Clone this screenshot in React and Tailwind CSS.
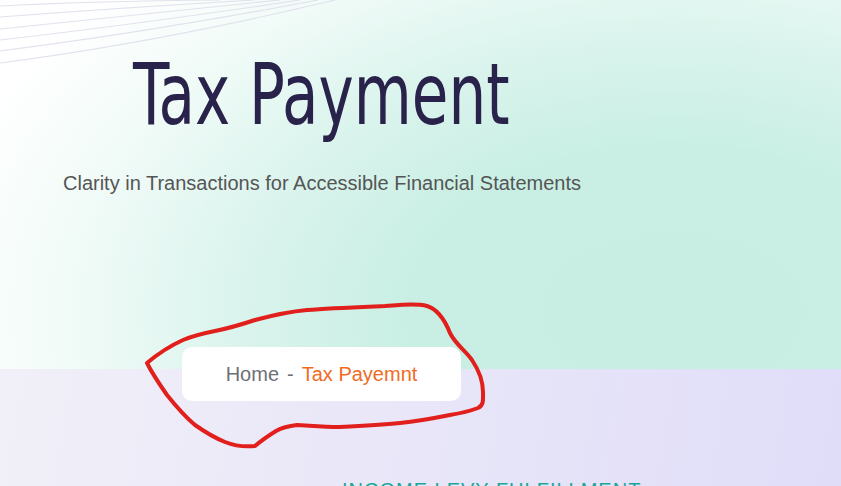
export default function App() {
  const arcs = [
    "M0 63 Q160 42 335 0",
    "M0 51 Q150 32 318 0",
    "M0 40 Q140 24 300 0",
    "M0 29 Q130 16 280 0",
    "M0 17 Q120 8 255 0",
    "M0 6 Q100 1 220 0",
  ];
  return (
    <div className="relative w-[841px] h-[486px] overflow-hidden font-['Liberation_Sans',Arial,sans-serif]">
      <section className="relative h-[369px] bg-[radial-gradient(ellipse_90%_130%_at_80%_85%,#c8eee3_0%,#c9efe4_35%,#dbf4ed_58%,#f1fbf8_80%,#ffffff_100%)]">
        <svg className="absolute left-0 top-0" width="360" height="70" viewBox="0 0 360 70" fill="none">
          {arcs.map((d, i) => (
            <path key={i} d={d} stroke="#e2e2ec" strokeWidth="1.2" />
          ))}
        </svg>
        <div className="relative pt-[46px] pl-[133px]">
          <h1 className="text-[#29234b] text-[86px] leading-[96px] font-normal font-['DejaVu_Sans_Condensed','Liberation_Sans',sans-serif] origin-left scale-x-[0.77] whitespace-nowrap">
            Tax Payment
          </h1>
        </div>
        <p className="relative mt-[29px] pl-[63px] text-[20px] leading-[24px] text-[#555555]">
          Clarity in Transactions for Accessible Financial Statements
        </p>
      </section>
      <section className="relative flex h-[117px] flex-col bg-[linear-gradient(100deg,#f1f0f8_0%,#e9e7f8_45%,#e0ddf9_100%)]">
        <div className="relative z-10 -mt-[22px] ml-[182px] flex h-[54px] w-[279px] shrink-0 items-center justify-center gap-[8px] rounded-[10px] bg-white text-[20px]">
          <span className="text-[#6e6f75]">Home</span>
          <span className="text-[#6e6f75]">-</span>
          <span className="text-[#f26a1f]">Tax Payemnt</span>
        </div>
        <p className="mt-[79px] shrink-0 pl-[342px] text-[20px] leading-[20px] tracking-[1px] text-[#1aa79a] whitespace-nowrap">
          INCOME LEVY FULFILLMENT
        </p>
      </section>
      <svg className="pointer-events-none absolute left-0 top-0 z-20" width="841" height="486" viewBox="0 0 841 486" fill="none">
        <path
          d="M147 363 C160 352 172 345 183 340 C195 335 205 333 215 331 C230 328 240 325 255 320 C270 316 285 312 307 310 C330 308 360 307 385 306 C400 305 415 303 427 306 C437 309 444 318 450 333 C456 345 465 350 472 360 C480 372 483 382 483 392 C483 400 484 405 478 408 C470 411 462 413 450 415 C430 419 420 421 400 423 C380 425 360 426 340 427 C320 427 305 425 297 425 C288 426 283 427 276 431 C268 436 262 440 255 446 C245 447 235 446 225 442 C215 438 205 432 195 425 C183 415 175 405 167 395 C160 385 153 375 147 363 Z"
          stroke="#e11f1c"
          strokeWidth="4"
          strokeLinejoin="round"
          strokeLinecap="round"
        />
      </svg>
    </div>
  );
}
